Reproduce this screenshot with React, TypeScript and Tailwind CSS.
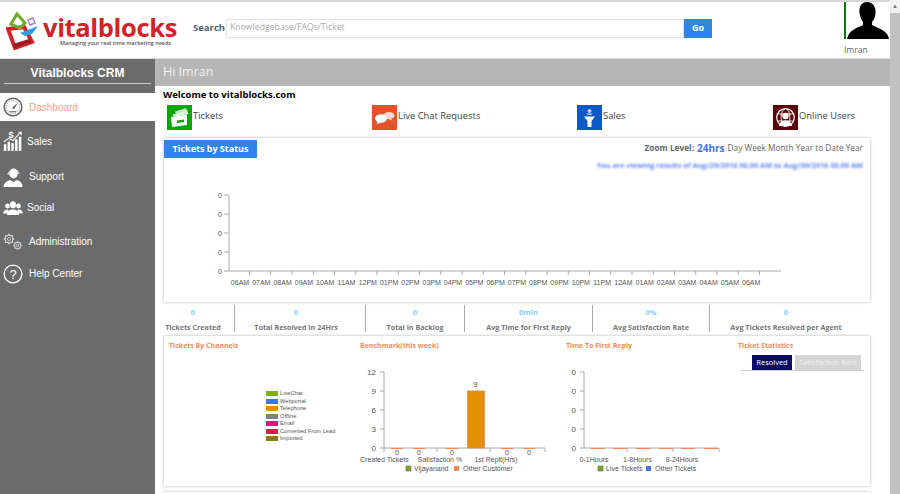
import React from "react";

const OPEN = "font-['Open_Sans',sans-serif]";
const ARIAL = "font-['Liberation_Sans',Arial,sans-serif]";

function Logo() {
  return (
    <svg width="38" height="42" viewBox="6 10 38 42" className="shrink-0">
      <path d="M8 29 L24 27 L32 42 L15 48 Z" fill="none" stroke="#d2232a" strokeWidth="4" strokeLinejoin="miter" />
      <path d="M15 48 L13 44 L29 39 L32 42 Z" fill="#9c1a20" />
      <path d="M11 24 L17 14 L25 23 L20 28 Z" fill="none" stroke="#6cab2b" strokeWidth="3" />
      <path d="M28 20 L33 18 L35 23 L30 25 Z" fill="none" stroke="#a67cc6" strokeWidth="1.4" />
      <path d="M20 33 L38 26 L32 34 L25 36 Z" fill="#2d9fe0" />
    </svg>
  );
}

function Avatar() {
  return (
    <svg width="43" height="37" viewBox="0 0 43 37" className="block">
      <path d="M21 0 C15 0 13 5 13.5 11 C14 15 15.5 18 17 20 L17 23 C12 26 3 27 1 37 L43 37 C42 28 31 26 26 23 L26 20 C28 18 29.5 14 29.5 11 C30 5 27 0 21 0 Z" fill="#000" />
    </svg>
  );
}

const iconCls = "shrink-0";

function GaugeIcon() {
  return (
    <svg width="20" height="20" viewBox="0 0 20 20" className={iconCls}>
      <circle cx="10" cy="10" r="8.8" fill="none" stroke="#666" strokeWidth="1.6" />
      <circle cx="10" cy="10" r="6.6" fill="none" stroke="#888" strokeWidth="1" strokeDasharray="1 1.4" />
      <path d="M9 11 L15 5.5 L11 12 Z" fill="#555" />
      <rect x="6.5" y="14" width="7" height="1.4" fill="#888" />
    </svg>
  );
}

function SalesIcon() {
  return (
    <svg width="20" height="21" viewBox="0 0 24 25" className={iconCls}>
      <rect x="1" y="17" width="3" height="8" fill="#fff" />
      <rect x="5.5" y="14" width="3" height="11" fill="#fff" />
      <rect x="10" y="15.5" width="3" height="9.5" fill="#fff" />
      <rect x="14.5" y="11" width="3" height="14" fill="#fff" />
      <rect x="19" y="8" width="3" height="17" fill="#fff" />
      <path d="M1 14 L7 10 L12 12.5 L20 4" fill="none" stroke="#fff" strokeWidth="1.3" />
      <path d="M18 2 L22.5 2 L22.5 6.5 Z" fill="#fff" />
      <text x="6.5" y="9" fill="#fff" className={`${ARIAL} text-[11px] font-bold`}>$</text>
    </svg>
  );
}

function SupportIcon() {
  return (
    <svg width="20" height="20" viewBox="0 0 20 20" className={iconCls}>
      <ellipse cx="10.5" cy="5.5" rx="4.3" ry="5" fill="#fff" />
      <path d="M0.5 19 C1 14 5 13 7 12 L10.5 14 L14 12 C16 13 19.5 14 19.5 19 Z" fill="#fff" />
      <path d="M5 7 C4.5 1 16 0 16 6" fill="none" stroke="#fff" strokeWidth="1" />
      <path d="M5 7 C5 10 7 11 10 11" fill="none" stroke="#6b6b6b" strokeWidth="0.9" />
    </svg>
  );
}

function SocialIcon() {
  return (
    <svg width="20" height="14" viewBox="0 0 20 14" className={iconCls}>
      <circle cx="4.5" cy="5" r="2.4" fill="#fff" />
      <circle cx="15.5" cy="5" r="2.4" fill="#fff" />
      <path d="M0 12.5 C0.5 9 3 8.5 5 8.5 L7 12.5 Z" fill="#fff" />
      <path d="M20 12.5 C19.5 9 17 8.5 15 8.5 L13 12.5 Z" fill="#fff" />
      <ellipse cx="10" cy="3.8" rx="3" ry="3.5" fill="#fff" />
      <path d="M4 14 C4.5 9.5 7.5 8.5 10 8.5 C12.5 8.5 15.5 9.5 16 14 Z" fill="#fff" />
    </svg>
  );
}

function Gear({ cx, cy, r }: { cx: number; cy: number; r: number }) {
  const teeth = [0, 45, 90, 135];
  return (
    <g>
      {teeth.map((a) => (
        <rect
          key={a}
          x={cx - r * 1.3}
          y={cy - r * 0.22}
          width={r * 2.6}
          height={r * 0.44}
          fill="#ddd"
          transform={`rotate(${a} ${cx} ${cy})`}
        />
      ))}
      <circle cx={cx} cy={cy} r={r} fill="#6b6b6b" stroke="#ddd" strokeWidth="1" />
      <circle cx={cx} cy={cy} r={r * 0.4} fill="none" stroke="#ddd" strokeWidth="0.8" />
    </g>
  );
}

function AdminIcon() {
  return (
    <svg width="20" height="18" viewBox="0 0 20 18" className={iconCls}>
      <Gear cx={6} cy={6} r={4} />
      <Gear cx={14.5} cy={12.5} r={3.2} />
    </svg>
  );
}

function HelpIcon() {
  return (
    <svg width="20" height="20" viewBox="0 0 20 20" className={iconCls}>
      <circle cx="10" cy="10" r="8.9" fill="none" stroke="#fff" strokeWidth="1.3" />
      <text x="10" y="14.5" textAnchor="middle" fill="#fff" className={`${ARIAL} text-[13px]`}>?</text>
    </svg>
  );
}

function TicketsTile() {
  return (
    <div className="w-[25px] h-[25px] bg-[#0aa60a] shrink-0">
      <svg width="25" height="25" viewBox="0 0 25 25">
        <path d="M8 6.5 L19 3 L20.5 6 L9 9 Z" fill="#bfe8bf" />
        <path d="M5.5 9.5 L20 5.5 L21.5 9 L7 12 Z" fill="#dff5df" />
        <path d="M4 12 L20 9.5 L20 20 L5 22 Z" fill="#fff" />
        <path d="M10 15.5 L17 14.5 L17 16.9 L10 17.9 Z" fill="#0aa60a" />
      </svg>
    </div>
  );
}

function ChatTile() {
  return (
    <div className="w-[25px] h-[25px] bg-[#e0532b] shrink-0">
      <svg width="25" height="25" viewBox="0 0 25 25">
        <ellipse cx="17" cy="10.5" rx="5.5" ry="3.6" fill="#f6d8cc" />
        <path d="M18 13 L21 16 L15 13.5 Z" fill="#f6d8cc" />
        <ellipse cx="9" cy="13.5" rx="6" ry="4.2" fill="#fff" />
        <path d="M6 16.5 L4.5 19.5 L10 17 Z" fill="#fff" />
      </svg>
    </div>
  );
}

function SalesTile() {
  return (
    <div className="w-[25px] h-[25px] bg-[#0d57c6] shrink-0">
      <svg width="25" height="25" viewBox="0 0 25 25">
        <circle cx="12.5" cy="6" r="2" fill="#bcd2f2" />
        <path d="M9.5 8.5 L15.5 8.5 L14 10 L11 10 Z" fill="#bcd2f2" />
        <path d="M7 11.5 L18 11.5 L14.5 16 L14.5 22 L10.5 22 L10.5 16 Z" fill="#fff" />
      </svg>
    </div>
  );
}

function UsersTile() {
  return (
    <div className="w-[25px] h-[25px] bg-[#5a0505] shrink-0">
      <svg width="25" height="25" viewBox="0 0 25 25">
        <circle cx="12.5" cy="12.5" r="8.8" fill="none" stroke="#fff" strokeWidth="1.2" />
        <ellipse cx="12.5" cy="12.5" rx="4.4" ry="8.8" fill="none" stroke="#fff" strokeWidth="0.9" />
        <path d="M4 9 H21 M4 16 H21" stroke="#fff" strokeWidth="0.9" />
        <circle cx="12.5" cy="11" r="3.2" fill="#fff" />
        <path d="M6 21 C7 16 10 15.5 12.5 15.5 C15 15.5 18 16 19 21 Z" fill="#fff" />
      </svg>
    </div>
  );
}

const nav = [
  { label: "Sales", icon: <SalesIcon />, cls: "h-[39px] pt-[9px] gap-[4px] pl-[3px]", text: "pt-[5px]" },
  { label: "Support", icon: <SupportIcon />, cls: "h-[33px] pt-[8px] gap-[6px] pl-[3px]", text: "pt-[2px]" },
  { label: "Social", icon: <SocialIcon />, cls: "h-[31px] pt-[8px] gap-[4px] pl-[3px]", text: "" },
  { label: "Administration", icon: <AdminIcon />, cls: "h-[35px] pt-[9px] gap-[6px] pl-[3px]", text: "pt-[2px]" },
  { label: "Help Center", icon: <HelpIcon />, cls: "h-[33px] pt-[5px] gap-[6px] pl-[3px]", text: "pt-[3px]" },
];

const tiles = [
  { label: "Tickets", tile: <TicketsTile />, w: "w-[205px]" },
  { label: "Live Chat Requests", tile: <ChatTile />, w: "w-[205px]" },
  { label: "Sales", tile: <SalesTile />, w: "w-[196px]" },
  { label: "Online Users", tile: <UsersTile />, w: "w-[97px]" },
];

const hours = [
  "06AM","07AM","08AM","09AM","10AM","11AM","12PM","01PM","02PM","03PM","04PM","05PM","06PM",
  "07PM","08PM","09PM","10PM","11PM","12AM","01AM","02AM","03AM","04AM","05AM","06AM",
];

const chartText = `${ARIAL} text-[7px] fill-[#555]`;

function StatusChart() {
  const ys = [194, 213, 232, 251, 270];
  return (
    <svg width="700" height="122" viewBox="166 178 700 122" className="block mt-[1px] ml-[2px]">
      <path d="M229 194 V270 H781" fill="none" stroke="#aaa" strokeWidth="1" />
      {ys.map((y) => (
        <g key={y}>
          <path d={`M224 ${y} H229`} stroke="#aaa" />
          <text x="222" y={y + 2.5} textAnchor="end" className={chartText}>0</text>
        </g>
      ))}
      {hours.map((h, i) => (
        <g key={i}>
          <path d={`M${249.5 + i * 21.25} 270 V274`} stroke="#aaa" />
          <text x={240 + i * 21.3} y="283.5" textAnchor="middle" className={chartText}>{h}</text>
        </g>
      ))}
    </svg>
  );
}

const stats = [
  { v: "0", l: "Tickets Created", w: "w-[71px]", pad: "pr-[12px]" },
  { v: "0", l: "Total Resolved in 24Hrs", w: "w-[131px]", pad: "pr-[8px]" },
  { v: "0", l: "Total in Backlog", w: "w-[99px]", pad: "" },
  { v: "0min", l: "Avg Time for First Reply", w: "w-[128px]", pad: "" },
  { v: "0%", l: "Avg Satisfaction Rate", w: "w-[117px]", pad: "" },
  { v: "0", l: "Avg Tickets Resolved per Agent", w: "w-[160px]", pad: "pr-[8px]" },
];

const channels = [
  ["LiveChat", "bg-[#7fb20e]"],
  ["Webportal", "bg-[#2a7fe0]"],
  ["Telephone", "bg-[#e09000]"],
  ["Offline", "bg-[#7f7f7f]"],
  ["Email", "bg-[#f5097f]"],
  ["Converted From Lead", "bg-[#d8213c]"],
  ["Imported", "bg-[#808000]"],
];

const axisText = `${ARIAL} text-[8px] fill-[#555]`;
const labelText = `${ARIAL} text-[7px] fill-[#555]`;

function BenchmarkChart() {
  const ys: [number, string][] = [[372, "12"], [391, "9"], [410, "6"], [429, "3"], [448, "0"]];
  return (
    <svg width="200" height="116" viewBox="360 359 200 116" className="block">
      <path d="M384 372 V448 H545" fill="none" stroke="#aaa" />
      {ys.map(([y, t]) => (
        <g key={y}>
          <path d={`M380 ${y} H384`} stroke="#aaa" />
          <text x="376" y={y + 3} textAnchor="end" className={axisText}>{t}</text>
        </g>
      ))}
      {[384, 437, 490, 545].map((x) => (
        <path key={x} d={`M${x} 448 V452`} stroke="#aaa" />
      ))}
      <rect x="467.5" y="391" width="17" height="57" fill="#e09000" stroke="#e08a5a" strokeWidth="0.8" />
      <text x="475.5" y="387" textAnchor="middle" className={axisText}>9</text>
      {[397, 419, 452, 507, 529].map((x) => (
        <g key={x}>
          <path d={`M${x - 6} 448.5 H${x + 6}`} stroke="#ec8b55" />
          <text x={x} y="454.5" textAnchor="middle" className={labelText}>0</text>
        </g>
      ))}
      <text x="360" y="461.5" className={labelText}>Created Tickets</text>
      <text x="440" y="461.5" textAnchor="middle" className={labelText}>Satisfaction %</text>
      <text x="496" y="461.5" textAnchor="middle" className={labelText}>1st Replt(Hrs)</text>
      <rect x="406" y="466" width="5" height="5" fill="#7fa81a" stroke="#666" strokeWidth="0.6" />
      <text x="414" y="471" className={labelText}>Vijayanand</text>
      <rect x="454" y="466" width="5" height="5" fill="#ec8b55" />
      <text x="463" y="471" className={labelText}>Other Customer</text>
    </svg>
  );
}

function ReplyChart() {
  return (
    <svg width="172" height="116" viewBox="566 359 172 116" className="block">
      <path d="M584 372 V448 H719" fill="none" stroke="#aaa" />
      {[372, 391, 410, 429, 448].map((y) => (
        <g key={y}>
          <path d={`M580 ${y} H584`} stroke="#aaa" />
          <text x="576" y={y + 3} textAnchor="end" className={axisText}>0</text>
        </g>
      ))}
      {[627, 673, 719].map((x) => (
        <path key={x} d={`M${x} 448 V452`} stroke="#aaa" />
      ))}
      {[591, 613, 636, 659, 681, 704].map((x) => (
        <path key={x} d={`M${x} 448.5 H${x + 14}`} stroke="#ec8b55" />
      ))}
      <text x="594" y="461.5" textAnchor="middle" className={labelText}>0-1Hours</text>
      <text x="637.5" y="461.5" textAnchor="middle" className={labelText}>1-8Hours</text>
      <text x="682" y="461.5" textAnchor="middle" className={labelText}>8-24Hours</text>
      <rect x="598" y="466" width="5" height="5" fill="#7fa81a" stroke="#666" strokeWidth="0.6" />
      <text x="606" y="471" className={labelText}>Live Tickets</text>
      <rect x="646" y="466" width="5" height="5" fill="#4a74e8" />
      <text x="655" y="471" className={labelText}>Other Tickets</text>
    </svg>
  );
}

const panelTitle = `${OPEN} text-[7px] leading-[10px] font-bold text-[#f58d5c]`;

export default function App() {
  return (
    <div className={`flex w-[900px] h-[494px] overflow-hidden bg-white ${OPEN}`}>
      <div className="w-[890px] h-full flex flex-col shrink-0">
        <div className="h-[2px] bg-[#d8d8d8] shrink-0" />
        <header className="h-[57px] shrink-0 flex border-b border-[#ddd]">
          <div className="w-[193px] shrink-0 flex items-start pl-[6px] pt-[8px]">
            <Logo />
            <div className="flex flex-col -ml-[1px] whitespace-nowrap">
              <span className="text-[25.5px] leading-[28px] font-bold text-[#d2232a] tracking-[-0.35px] mt-[3px]">vitalblocks</span>
              <span className="text-[5.5px] leading-[7px] font-semibold text-[#555] pl-[17px] -mt-[1px]">Managing your real time marketing needs</span>
            </div>
          </div>
          <div className="flex items-center h-[18px] mt-[17px]">
            <span className="text-[9.5px] font-bold text-[#555c70] w-[33px]">Search</span>
            <div className="w-[458px] h-[19px] border border-[#e4e4e4] pl-[3px] flex items-center text-[8.7px] text-[#aaa]">Knowledgebase/FAQs/Ticket</div>
            <div className="w-[28px] h-[19px] bg-[#2f86e4] text-white text-[9px] font-bold flex items-center justify-center">Go</div>
          </div>
          <div className="ml-[132px] flex flex-col">
            <div className="w-[45px] h-[37px] border-l-2 border-[#0a7a0a]"><Avatar /></div>
            <span className="text-[8.5px] leading-[11px] text-[#666] mt-[5px]">Imran</span>
          </div>
        </header>
        <div className="flex flex-1 min-h-0">
          <aside className={`w-[155px] shrink-0 bg-[#6b6b6b] flex flex-col ${ARIAL}`}>
            <div className="h-[25px] mx-[4px] pt-[7px] border-b border-[#ccc] mb-[9px] shrink-0 text-center text-white text-[12px] leading-[14px] font-bold">Vitalblocks CRM</div>
            <div className="h-[28px] bg-white flex items-center gap-[6px] pl-[3px] shrink-0 text-[10px] text-[#f7a27e]">
              <GaugeIcon />
              <span>Dashboard</span>
            </div>
            {nav.map((n) => (
              <div key={n.label} className={`flex items-start shrink-0 text-[10px] leading-[13px] text-white ${n.cls}`}>
                {n.icon}
                <span className={n.text}>{n.label}</span>
              </div>
            ))}
          </aside>
          <main className="flex-1 min-w-0 flex flex-col">
            <div className="h-[27px] bg-[#b5b5b5] shrink-0 pl-[8px] flex items-center text-[12.5px] text-[#f2f2f2]">Hi Imran</div>
            <div className="pl-[9px] w-[715px] flex flex-col">
              <div className="h-[19px] shrink-0 pt-[3px] -ml-[1px] text-[9.5px] leading-[12px] font-bold text-black">Welcome to vitalblocks.com</div>
              <div className="h-[33px] shrink-0 flex pl-[3px]">
                {tiles.map((t) => (
                  <div key={t.label} className={`flex items-start ${t.w} shrink-0 text-[9.4px] leading-[13px] text-[#444]`}>
                    {t.tile}
                    <span className="pl-[1px] pt-[4px] whitespace-nowrap">{t.label}</span>
                  </div>
                ))}
              </div>
              <section className="w-[706px] h-[164px] shrink-0 bg-white shadow-[0_0_3px_rgba(0,0,0,0.3)] flex flex-col">
                <div className="h-[40px] shrink-0 flex justify-between">
                  <div className="w-[93px] h-[18px] mt-[2px] bg-[#2f86e4] text-white text-[9px] font-bold flex items-center justify-center">Tickets by Status</div>
                  <div className="flex flex-col items-end pr-[7px]">
                    <div className="h-[19px] flex items-center text-[8.3px] text-[#666] mt-[1px]">
                      <span className="font-bold">Zoom Level:</span>
                      <span className="text-[10px] font-bold text-[#3b74e8] mx-[3px]">24hrs</span>
                      <span>Day Week Month Year to Date Year</span>
                    </div>
                    <div className="text-[7.3px] leading-[10px] font-bold text-[#5f86f5] blur-[1.2px] mt-[2px] whitespace-nowrap">You are viewing results of Aug/29/2016 06:00 AM to Aug/30/2016 05:00 AM</div>
                  </div>
                </div>
                <StatusChart />
              </section>
              <div className="h-[34px] shrink-0 flex w-[706px]">
                {stats.map((s, i) => (
                  <div key={s.l} className={`${s.w} ${s.pad} shrink-0 h-[27px] mt-[3px] flex flex-col items-center ${i < 5 ? "border-r border-[#aaa]" : ""}`}>
                    <span className="text-[7.5px] leading-[12px] font-bold text-[#7dcfff] mt-[1px]">{s.v}</span>
                    <span className="text-[7.2px] leading-[12px] font-bold text-[#777] mt-[3px] whitespace-nowrap">{s.l}</span>
                  </div>
                ))}
              </div>
              <section className="w-[706px] h-[150px] shrink-0 bg-white shadow-[0_0_3px_rgba(0,0,0,0.3)] flex">
                <div className="w-[196px] shrink-0 pt-[5px] pl-[5px]">
                  <div className={panelTitle}>Tickets By Channels</div>
                  <div className="mt-[39px] ml-[97px] flex flex-col">
                    {channels.map(([n, c]) => (
                      <div key={n} className={`h-[7.5px] flex items-center gap-[2px] ${ARIAL} text-[5.7px] text-[#555] whitespace-nowrap`}>
                        <span className={`w-[12px] h-[5px] shrink-0 ${c}`} />
                        <span>{n}</span>
                      </div>
                    ))}
                  </div>
                </div>
                <div className="w-[206px] shrink-0 pt-[5px]">
                  <div className={panelTitle}>Benchmark(this week)</div>
                  <div className="mt-[8px]"><BenchmarkChart /></div>
                </div>
                <div className="w-[172px] shrink-0 pt-[5px]">
                  <div className={panelTitle}>Time To First Reply</div>
                  <div className="mt-[8px]"><ReplyChart /></div>
                </div>
                <div className="w-[132px] shrink-0 pt-[5px]">
                  <div className={panelTitle}>Ticket Statistics</div>
                  <div className="mt-[4px] ml-[3px] w-[123px] h-[16px] border-b border-[#ccc] flex pl-[11px] gap-[3px] text-[7.5px]">
                    <div className="w-[40px] h-[15px] bg-[#0a0a60] text-white flex items-center justify-center">Resolved</div>
                    <div className="w-[66px] h-[15px] bg-[#d4d4d4] text-[#f0f0f0] flex items-center justify-center whitespace-nowrap">Satisfaction Rate</div>
                  </div>
                </div>
              </section>
              <div className="mt-[6px] h-[10px] w-[706px] shrink-0 shadow-[0_0_3px_rgba(0,0,0,0.3)]" />
            </div>
          </main>
        </div>
      </div>
      <div className="w-[10px] h-full shrink-0 bg-[#f1f1f1] flex flex-col">
        <div className="h-[13px] shrink-0 flex items-center justify-center text-[6px] text-[#777]">▲</div>
        <div className="flex-1 bg-[#c1c1c1]" />
      </div>
    </div>
  );
}
